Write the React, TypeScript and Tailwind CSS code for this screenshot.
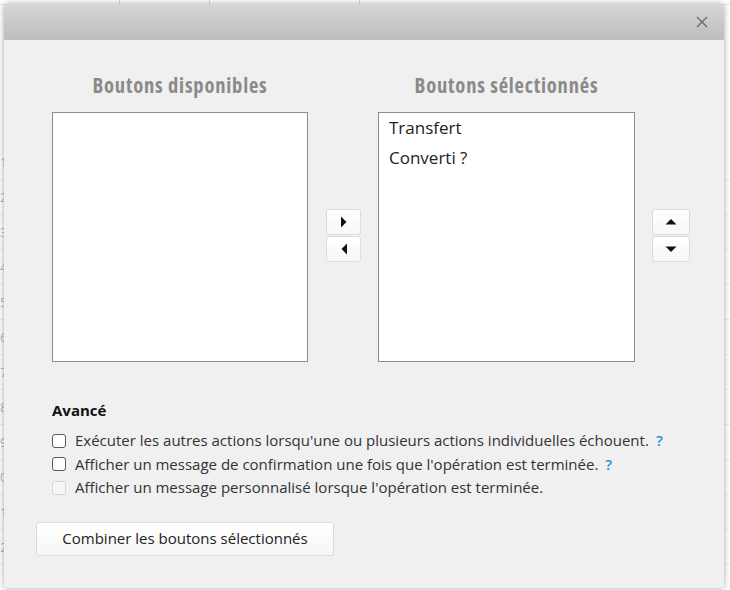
import React from 'react';

const font = { fontFamily: '"Open Sans", "Liberation Sans", sans-serif' };

function ArrowButton({ dir }: { dir: 'left' | 'right' | 'up' | 'down' }) {
  const paths: Record<string, string> = {
    right: 'M3 0.5 L8.5 6 L3 11.5 Z',
    left: 'M9 0.5 L3.5 6 L9 11.5 Z',
    up: 'M0.5 8.5 L6 3 L11.5 8.5 Z',
    down: 'M0.5 3.5 L6 9 L11.5 3.5 Z',
  };
  return (
    <button className="flex h-[26px] w-full items-center justify-center rounded-[3px] border border-[#dcdcdc] bg-gradient-to-b from-white to-[#f7f7f7]">
      <svg width="12" height="12" viewBox="0 0 12 12">
        <path d={paths[dir]} fill="#111" />
      </svg>
    </button>
  );
}

function Check({ disabled }: { disabled?: boolean }) {
  return (
    <span
      className={
        'inline-block h-[14px] w-[14px] shrink-0 rounded-[3px] border ' +
        (disabled ? 'border-[#d4d4d4] bg-[#f6f6f6]' : 'border-[#5a5a5a] bg-white')
      }
    />
  );
}

export default function App() {
  const rows = ['1', '2', '3', '4', '5', '6', '7', '8', '9', '0', '1', '2'];
  return (
    <div className="relative h-[590px] w-[730px] overflow-hidden bg-white" style={font}>
      {/* page behind the dialog */}
      <div className="flex h-[5px] border-b border-[#e5e5e5]">
        <div className="w-[120px] border-r border-[#ddd]" />
        <div className="w-[90px] border-r border-[#ddd]" />
        <div className="w-[150px] border-r border-[#ddd]" />
      </div>
      <div className="flex flex-col pt-[140px]">
        {rows.map((r, i) => (
          <div key={i} className="h-[35px] border-b border-[#eee] text-[13px] leading-[35px] text-[#bbb]">
            {r}
          </div>
        ))}
      </div>

      {/* dialog */}
      <div className="absolute left-[4px] top-[4px] flex h-[584px] w-[720px] flex-col overflow-hidden rounded-[3px] bg-[#f0f0f0] shadow-[0_0_6px_rgba(0,0,0,0.35)]">
        <div className="flex h-[36px] shrink-0 items-center justify-end bg-gradient-to-b from-[#d6d6d6] to-[#bdbdbd] pr-[16px]">
          <svg width="12" height="12" viewBox="0 0 12 12">
            <path d="M1 1 L11 11 M11 1 L1 11" stroke="#666" strokeWidth="1.3" />
          </svg>
        </div>

        <div className="flex flex-col pl-[48px] pt-[32px]">
          <div className="flex items-center">
            <div className="flex w-[256px] flex-col">
              <h2 className="mb-[14px] text-center text-[20.5px] font-bold leading-[26px] tracking-[0.8px] text-[#8a8a8a]" style={{ fontStretch: 'condensed' }}>
                Boutons disponibles
              </h2>
              <div className="h-[250px] border border-[#8c8c8c] bg-white" />
            </div>
            <div className="ml-[18px] mt-[36px] flex w-[35px] flex-col gap-[1px]">
              <ArrowButton dir="right" />
              <ArrowButton dir="left" />
            </div>
            <div className="ml-[17px] flex w-[257px] flex-col">
              <h2 className="mb-[14px] text-center text-[20.5px] font-bold leading-[26px] tracking-[0.8px] text-[#8a8a8a]" style={{ fontStretch: 'condensed' }}>
                Boutons sélectionnés
              </h2>
              <div className="flex h-[250px] flex-col border border-[#8c8c8c] bg-white px-[10px] pt-0 text-[17px] leading-[30px] text-[#222]">
                <div>Transfert</div>
                <div>Converti ?</div>
              </div>
            </div>
            <div className="ml-[17px] mt-[36px] flex w-[38px] flex-col gap-[1px]">
              <ArrowButton dir="up" />
              <ArrowButton dir="down" />
            </div>
          </div>

          <div className="mt-[38px] text-[15px] font-bold leading-[20px] text-[#111]">Avancé</div>
          <div className="mt-[9px] flex flex-col text-[15px] leading-[23.5px] text-[#333]">
            <label className="flex items-center gap-[9px]">
              <Check />
              <span>
                Exécuter les autres actions lorsqu'une ou plusieurs actions individuelles échouent.
                <span className="ml-[7px] font-semibold text-[#1e93d6]">?</span>
              </span>
            </label>
            <label className="flex items-center gap-[9px]">
              <Check />
              <span>
                Afficher un message de confirmation une fois que l'opération est terminée.
                <span className="ml-[7px] font-semibold text-[#1e93d6]">?</span>
              </span>
            </label>
            <label className="flex items-center gap-[9px]">
              <Check disabled />
              <span>Afficher un message personnalisé lorsque l'opération est terminée.</span>
            </label>
          </div>
        </div>

        <div className="mt-[22px] pl-[32px]">
          <button className="h-[34px] w-[298px] rounded-[3px] border border-[#dadada] bg-gradient-to-b from-white to-[#f6f6f6] text-[15px] text-[#222]">
            Combiner les boutons sélectionnés
          </button>
        </div>
      </div>
    </div>
  );
}
